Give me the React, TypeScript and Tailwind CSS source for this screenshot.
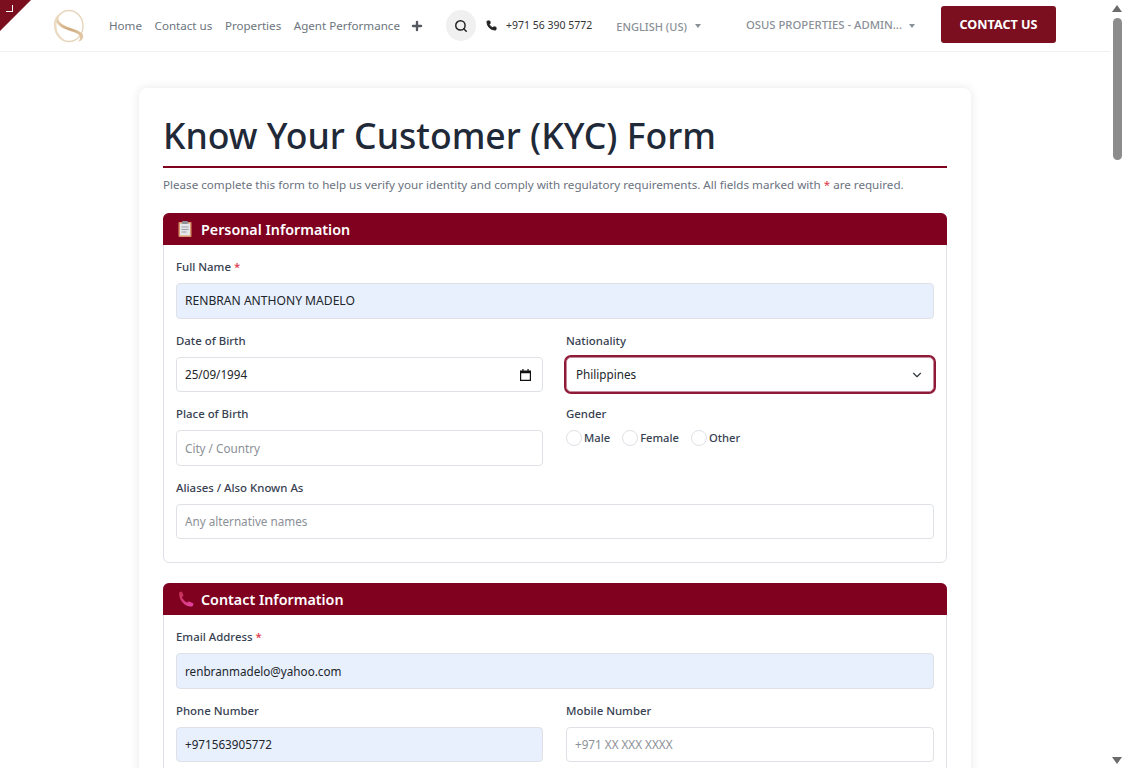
import { ReactNode } from "react"
import { ChevronDown, Phone, Plus, Search } from "lucide-react"

const navLinks = ["Home", "Contact us", "Properties", "Agent Performance"]

function Logo() {
  return (
    <svg width="32" height="34" viewBox="0 0 32 34" fill="none">
      <defs>
        <linearGradient id="gold" x1="0" y1="0" x2="1" y2="1">
          <stop offset="0" stopColor="#ecd9bd" />
          <stop offset="0.5" stopColor="#cfa97c" />
          <stop offset="1" stopColor="#e6d2b4" />
        </linearGradient>
      </defs>
      <ellipse cx="16" cy="17" rx="14" ry="15.5" stroke="#e6d5bd" strokeWidth="1.4" />
      <path d="M12 2 C3 5 0 11 1 18 C2 26 7 31 14 32.5 C8 29 3.5 24 3.5 17 C3.5 11 6 6 12 2 Z" fill="#ecdcc4" />
      <path
        d="M6 6 C3 12 9 16 16 18.5 C22 20.5 28 22 30 26 C31 30 28 32 25 33 C28 30 28 26 23 24 C17 21.5 8 20 4 14 C3 11 4 8 6 6 Z"
        fill="url(#gold)"
      />
    </svg>
  )
}

function ClipboardIcon() {
  return (
    <svg width="14" height="16" viewBox="0 0 14 16">
      <rect x="0.5" y="1" width="13" height="15" rx="1" fill="#d9976b" />
      <rect x="2" y="2.5" width="10" height="12" fill="#e6e6ea" />
      <rect x="4" y="0" width="6" height="3" rx="1" fill="#8b8f98" />
      <path d="M3.5 6h7M3.5 8.5h7M3.5 11h5" stroke="#9a9ca6" strokeWidth="1" />
    </svg>
  )
}

function PhoneEmoji() {
  return (
    <svg width="16" height="16" viewBox="0 0 16 16">
      <defs>
        <linearGradient id="phone" x1="0" y1="0" x2="1" y2="1">
          <stop offset="0" stopColor="#c2304f" />
          <stop offset="1" stopColor="#e844a8" />
        </linearGradient>
      </defs>
      <path
        d="M1 2.5 C1 1 2.5 .5 4 .8 L5.5 4.8 L3.9 6 C4.8 8.5 6.8 10.6 9.5 11.6 L10.8 10.2 L15.4 12.4 C15.6 14 14.5 15.6 12.8 15.6 C6.5 15.4 1.2 9.5 1 2.5 Z"
        fill="url(#phone)"
      />
    </svg>
  )
}

// chrome's native date picker glyph
function DateGlyph() {
  return (
    <svg width="11" height="12" viewBox="0 0 12 13">
      <path d="M0 1.5h12V13H0Z M1.3 4.5V11.7H10.7V4.5Z" fill="#111" fillRule="evenodd" />
      <rect x="2.5" y="0" width="1.4" height="2" fill="#111" />
      <rect x="8.1" y="0" width="1.4" height="2" fill="#111" />
    </svg>
  )
}

function Label({ text, required }: { text: string; required?: boolean }) {
  return (
    <div className="h-[21px] mb-[6px] text-[11.4px] leading-[21px] font-medium text-[#374151]">
      {text}
      {required && <span className="text-[#dc3545]"> *</span>}
    </div>
  )
}

function TextField({
  label,
  value,
  placeholder,
  required,
  filled,
  large,
}: {
  label: string
  value?: string
  placeholder?: string
  required?: boolean
  filled?: boolean
  large?: boolean
}) {
  return (
    <div className="mb-[11px] min-w-0">
      <Label text={label} required={required} />
      <input
        readOnly
        value={value ?? ""}
        placeholder={placeholder}
        className={`block w-full h-[35.5px] px-[8px] rounded-[4px] border border-[#dee2e6] text-[#212529] placeholder:text-[#8b9096] outline-none ${
          filled ? "bg-[#e8f0fe]" : "bg-white"
        } ${large ? "text-[12.1px]" : "text-[11.7px]"}`}
      />
    </div>
  )
}

function Section({ title, icon, children }: { title: string; icon: ReactNode; children: ReactNode }) {
  return (
    <section className="mb-5 rounded-[6px] border border-[#dee2e6]">
      <div className="flex items-center h-8 -mx-px -mt-px rounded-t-[6px] bg-[#800020] pl-[15px]">
        <span className="flex w-[23px] items-center">{icon}</span>
        <h2 className="pt-[2px] text-[14.3px] font-semibold text-white">{title}</h2>
      </div>
      <div className="px-3 pt-[11px] pb-3">{children}</div>
    </section>
  )
}

function Radio({ label }: { label: string }) {
  return (
    <label className="flex items-center gap-[2px] text-[11.2px] font-medium text-[#374151]">
      <span className="h-[16px] w-[16px] rounded-full border border-[#dee2e6] bg-white" />
      {label}
    </label>
  )
}

function Header() {
  return (
    <header className="relative flex items-center h-[52px] border-b border-[#f0f0f0] bg-white pl-[53px] shrink-0">
      <div
        className="absolute left-0 top-0 h-[31px] w-[31px] bg-[#7b0f1f]"
        style={{ clipPath: "polygon(0 0, 100% 0, 0 100%)" }}
      >
        <span className="absolute left-[6px] top-[5px] h-[7px] w-[7px] border-r border-b border-white" />
      </div>
      <Logo />
      <nav className="ml-[24px] flex items-center gap-[12.6px] text-[11.6px] text-[#6c757d]">
        {navLinks.map((link) => (
          <a key={link} href="#">
            {link}
          </a>
        ))}
      </nav>
      <Plus className="ml-[10px] h-[14px] w-[14px] text-[#55595f]" strokeWidth={4} />
      <button className="ml-[22px] flex h-[31px] w-[30px] items-center justify-center rounded-full bg-[#f0f0f0]">
        <Search className="h-[14px] w-[14px] text-[#222]" strokeWidth={2.5} />
      </button>
      <Phone className="ml-[10px] h-[11px] w-[11px] text-[#222]" fill="#222" />
      <span className="ml-[9px] text-[10.5px] text-[#333]">+971 56 390 5772</span>
      <span className="ml-[24px] mt-[3px] text-[11px] font-medium text-[#8a9097]">ENGLISH (US)</span>
      <span className="ml-[8px] h-0 w-0 border-x-[3px] border-t-[4px] border-x-transparent border-t-[#8a9097]" />
      <span className="ml-[45px] text-[11.3px] font-medium text-[#8a9097]">OSUS PROPERTIES - ADMIN...</span>
      <span className="ml-[7px] h-0 w-0 border-x-[3.5px] border-t-[4px] border-x-transparent border-t-[#8a9097]" />
      <button className="ml-[26px] mb-[2px] h-[37px] w-[115px] rounded-[3px] bg-[#7b0f1f] pt-[2px] text-[12.6px] font-bold text-white">
        CONTACT US
      </button>
    </header>
  )
}

function Scrollbar() {
  return (
    <div className="flex w-[14px] shrink-0 flex-col items-center bg-white">
      <span className="mt-[5px] h-0 w-0 border-x-[5px] border-b-[7px] border-x-transparent border-b-[#6b6b6b]" />
      <span className="mt-[6px] h-[142px] w-[9px] rounded-full bg-[#8c8c8c]" />
      <span className="mt-auto mb-[4px] h-0 w-0 border-x-[5px] border-t-[7px] border-x-transparent border-t-[#6b6b6b]" />
    </div>
  )
}

export default function App() {
  return (
    <div className="flex h-screen overflow-hidden bg-white font-['Noto_Sans',sans-serif]">
      <div className="min-w-0 flex-1 overflow-hidden">
        <Header />
        <main className="mx-[139px] mt-9 rounded-[8px] bg-white px-6 pt-[23px] shadow-[0_0_10px_rgba(0,0,0,0.1)]">
          <h1 className="border-b-2 border-[#800020] pb-[6px] text-[35.6px] leading-[49px] font-medium text-[#1f2937]">
            Know Your Customer (KYC) Form
          </h1>
          <p className="mt-[7px] mb-[18px] text-[11.64px] leading-[20px] text-[#6b7280]">
            Please complete this form to help us verify your identity and comply with regulatory requirements. All
            fields marked with <span className="text-[#dc3545]">*</span> are required.
          </p>

          <Section title="Personal Information" icon={<ClipboardIcon />}>
            <TextField label="Full Name" value="RENBRAN ANTHONY MADELO" required filled large />
            <div className="grid grid-cols-[367px_1fr] gap-x-[23px]">
              <div className="mb-[11px]">
                <Label text="Date of Birth" />
                <div className="flex h-[35.5px] items-center justify-between rounded-[4px] border border-[#dee2e6] bg-white pl-[8px] pr-[11px] pt-px text-[11.7px] text-[#212529]">
                  25/09/1994
                  <DateGlyph />
                </div>
              </div>
              <div className="mb-[11px]">
                <Label text="Nationality" />
                <div className="flex h-[35.5px] items-center justify-between rounded-[5px] border border-[#c58a99] bg-white px-[9px] pt-px text-[11.7px] text-[#212529] shadow-[0_0_0_2px_#8f1a38]">
                  Philippines
                  <ChevronDown className="h-[14px] w-[14px] text-[#343a40]" />
                </div>
              </div>
              <TextField label="Place of Birth" placeholder="City / Country" />
              <div className="mb-[11px]">
                <Label text="Gender" />
                <div className="mt-px flex items-center gap-3">
                  <Radio label="Male" />
                  <Radio label="Female" />
                  <Radio label="Other" />
                </div>
              </div>
            </div>
            <TextField label="Aliases / Also Known As" placeholder="Any alternative names" />
          </Section>

          <Section title="Contact Information" icon={<PhoneEmoji />}>
            <TextField label="Email Address" value="renbranmadelo@yahoo.com" required filled />
            <div className="grid grid-cols-[367px_1fr] gap-x-[23px]">
              <TextField label="Phone Number" value="+971563905772" filled />
              <TextField label="Mobile Number" placeholder="+971 XX XXX XXXX" />
            </div>
          </Section>
        </main>
      </div>
      <Scrollbar />
    </div>
  )
}
